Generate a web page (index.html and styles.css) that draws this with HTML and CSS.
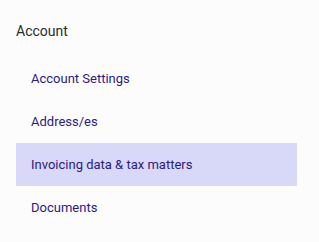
FILE: index.html
```html
<!DOCTYPE html>
<html>
<head>
<meta charset="utf-8">
<link rel="stylesheet" href="styles.css">
</head>
<body>
<nav class="sidebar">
  <h2 class="title">Account</h2>
  <ul class="menu">
    <li class="item">Account Settings</li>
    <li class="item">Address/es</li>
    <li class="item active">Invoicing data &amp; tax matters</li>
    <li class="item">Documents</li>
  </ul>
</nav>
</body>
</html>
```

FILE: styles.css
```css
html, body {
  margin: 0;
  padding: 0;
  background: #fcfcfd;
  font-family: Roboto, "Liberation Sans", sans-serif;
}
.sidebar {
  width: 281px;
  padding: 21px 0 0 16px;
}
.title {
  margin: 0 0 16px 0;
  font-size: 14px;
  font-weight: 400;
  line-height: 20px;
  color: #2b2b2b;
}
.menu {
  list-style: none;
  margin: 0;
  padding: 0;
  display: flex;
  flex-direction: column;
}
.item {
  height: 43px;
  display: flex;
  align-items: center;
  padding-left: 15px;
  font-size: 13px;
  color: #2c1a80;
}
.item.active {
  background: #d8d9f9;
}
```
